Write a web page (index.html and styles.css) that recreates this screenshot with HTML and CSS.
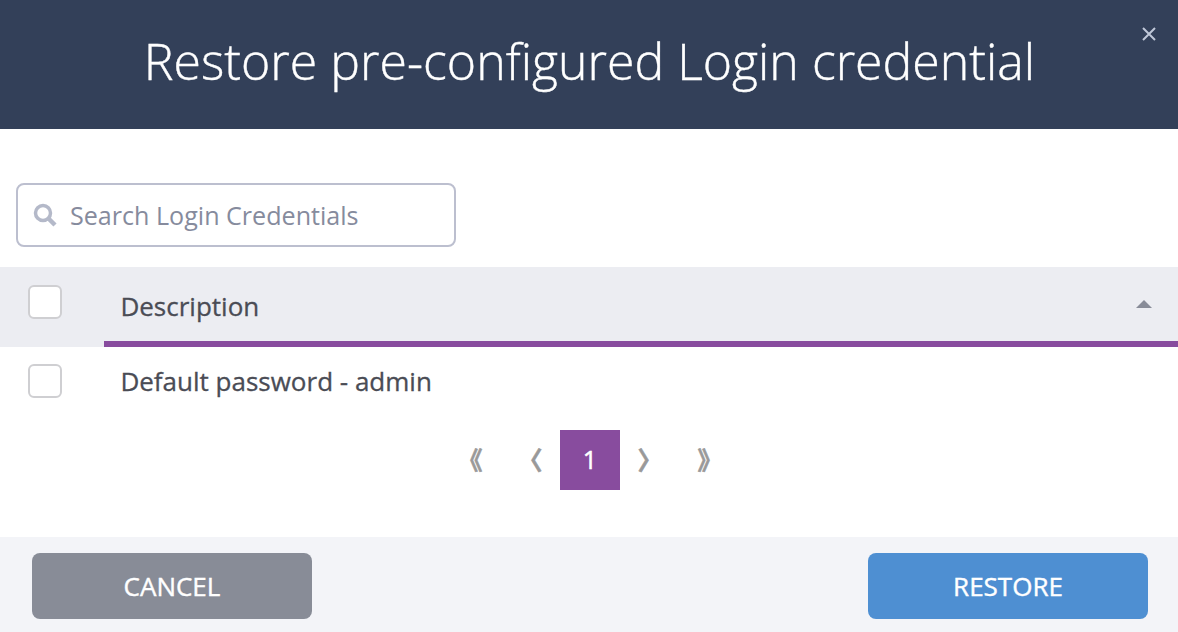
FILE: index.html
```html
<!DOCTYPE html>
<html lang="en">
<head>
  <meta charset="UTF-8" />
  <title>Restore pre-configured Login credential</title>
  <link rel="stylesheet" href="styles.css">
</head>
<body>
  <div class="modal">
    <div class="modal-header">
      <h1>Restore pre-configured Login credential</h1>
      <button class="close" aria-label="Close">
        <svg width="16" height="16" viewBox="0 0 16 16"><path d="M2 2l12 12M14 2L2 14" /></svg>
      </button>
    </div>

    <div class="modal-body">
      <div class="search">
        <svg width="26" height="26" viewBox="0 0 26 26"><circle cx="11" cy="11" r="7.5" /><path d="M16.5 16.5l6.5 6.5" /></svg>
        <input type="text" placeholder="Search Login Credentials" />
      </div>

      <div class="table-head">
        <div class="cell-check"><span class="checkbox"></span></div>
        <div class="cell-desc">
          <span>Description</span>
          <span class="sort-arrow"></span>
        </div>
      </div>
      <div class="table-row">
        <div class="cell-check"><span class="checkbox"></span></div>
        <div class="cell-text">Default password - admin</div>
      </div>

      <div class="pager">
        <a class="page-link">《</a>
        <a class="page-link">〈</a>
        <a class="page-link active">1</a>
        <a class="page-link">〉</a>
        <a class="page-link">》</a>
      </div>
    </div>

    <div class="modal-footer">
      <button class="btn btn-cancel">CANCEL</button>
      <button class="btn btn-restore">RESTORE</button>
    </div>
  </div>
</body>
</html>
```

FILE: styles.css
```css
* {
  box-sizing: border-box;
}
html, body {
  margin: 0;
  height: 100%;
  overflow: hidden;
}
body {
  font-family: "Open Sans", "Noto Sans CJK JP", sans-serif;
  color: #4a4c55;
  background: white;
}
.modal {
  display: flex;
  flex-direction: column;
  height: 632px;
}

/* header */
.modal-header {
  position: relative;
  height: 129px;
  background: #334059;
  display: flex;
  align-items: center;
  justify-content: center;
  flex-shrink: 0;
}
.modal-header h1 {
  margin: 0 0 7px 1px;
  font-size: 50px;
  font-weight: 300;
  color: white;
  -webkit-text-stroke: 0.4px white;
}
.close {
  position: absolute;
  top: 26px;
  right: 21px;
  width: 16px;
  height: 16px;
  padding: 0;
  background: none;
  border: none;
  display: flex;
}
.close path {
  stroke: #c0c8d8;
  stroke-width: 2;
  fill: none;
}

/* body */
.modal-body {
  flex: 1;
  padding-top: 54px;
}
.search {
  margin-left: 16px;
  width: 440px;
  height: 64px;
  border: 2px solid #bcbfcf;
  border-radius: 8px;
  display: flex;
  align-items: center;
  padding-left: 14px;
  gap: 12px;
}
.search svg {
  flex-shrink: 0;
}
.search circle, .search path {
  fill: none;
  stroke: #b4b9c9;
  stroke-width: 3.5;
}
.search path {
  stroke-width: 4.5;
}
.search input {
  border: none;
  outline: none;
  flex: 1;
  min-width: 0;
  padding: 0;
  font-family: inherit;
  font-size: 25.1px;
  color: #4a4c55;
}
.search input::placeholder {
  color: #868b9d;
  opacity: 1;
}

/* table */
.table-head {
  margin-top: 20px;
  height: 80px;
  background: #ecedf2;
  display: flex;
}
.table-row {
  height: 70px;
  display: flex;
}
.cell-check {
  width: 104px;
  flex-shrink: 0;
  padding: 18px 0 0 28px;
}
.table-row .cell-check {
  padding-top: 17px;
}
.checkbox {
  display: block;
  width: 34px;
  height: 34px;
  background: white;
  border: 2px solid #cfcfd2;
  border-radius: 6px;
}
.cell-desc {
  flex: 1;
  border-bottom: 6px solid #884c9e;
  display: flex;
  align-items: center;
  justify-content: space-between;
  padding: 4px 25px 0 16.4px;
  font-size: 26px;
  -webkit-text-stroke: 0.3px #4a4c55;
}
.cell-text {
  padding: 16px 0 0 16.4px;
  font-size: 26px;
  line-height: 36px;
  -webkit-text-stroke: 0.3px #4a4c55;
}
.sort-arrow {
  width: 0;
  height: 0;
  border-left: 8px solid transparent;
  border-right: 8px solid transparent;
  border-bottom: 8px solid #888c98;
  margin-bottom: 4px;
  margin-right: 1px;
}

/* pagination */
.pager {
  margin-top: 13px;
  padding-left: 2px;
  display: flex;
  justify-content: center;
}
.page-link {
  width: 60px;
  height: 60px;
  display: flex;
  align-items: center;
  justify-content: center;
  padding: 0 0 2px;
  font-size: 25px;
  font-weight: 700;
  color: #999;
  -webkit-text-stroke: 0.6px #999;
}
.page-link.active {
  background: #884c9e;
  color: white;
  font-weight: 400;
  -webkit-text-stroke: 0.5px white;
}

/* footer */
.modal-footer {
  height: 95px;
  flex-shrink: 0;
  background: #f3f4f8;
  display: flex;
  justify-content: space-between;
  padding: 16px 30px 0 32px;
}
.btn {
  width: 280px;
  height: 66px;
  border: none;
  border-radius: 8px;
  color: white;
  font-family: inherit;
  font-size: 26px;
  font-weight: 400;
  -webkit-text-stroke: 0.4px white;
}
.btn-cancel {
  background: #888c97;
}
.btn-restore {
  background: #4e8fd2;
}
```
